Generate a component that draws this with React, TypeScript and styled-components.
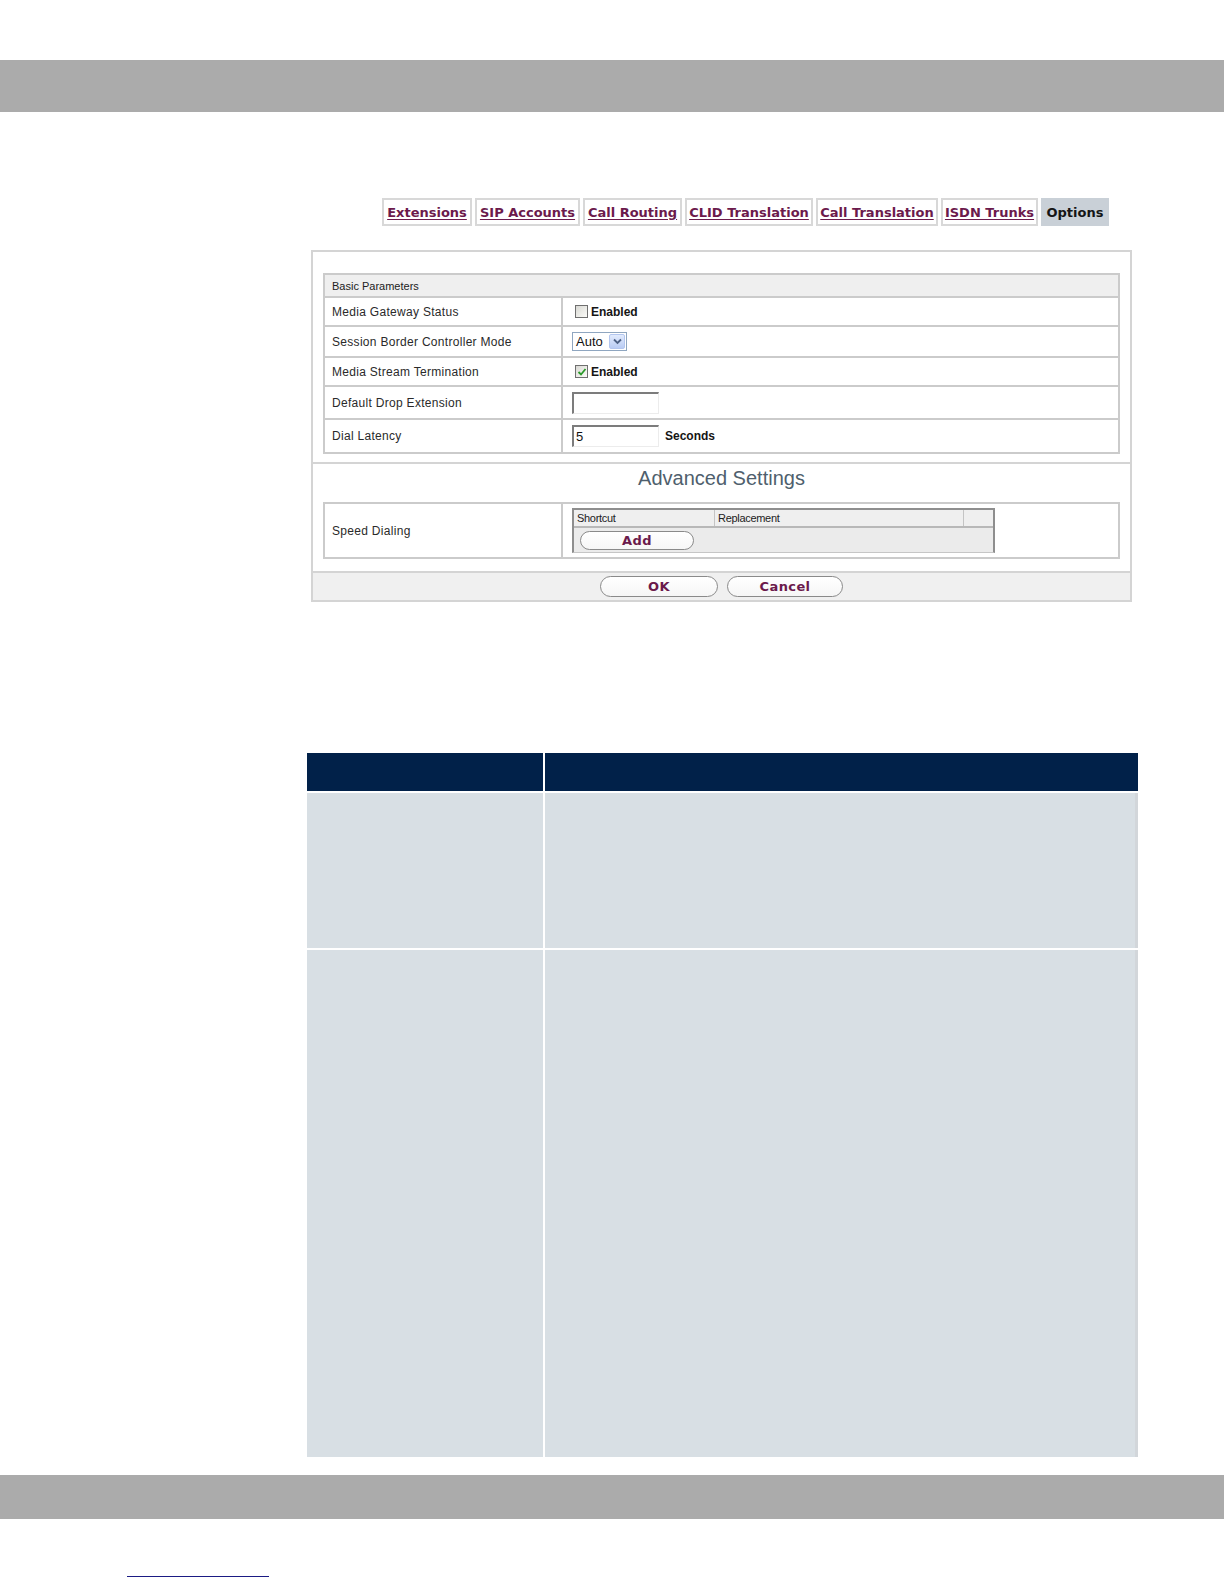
import styled, { createGlobalStyle } from "styled-components";

const GlobalStyle = createGlobalStyle`
  body {
    margin: 0;
    background: #fff;
    font-family: "Liberation Sans", Arial, sans-serif;
  }
`;

const MAROON = "#6b1a4c";
const GRID = "#cbcbcb";

const Page = styled.div`
  display: flex;
  flex-direction: column;
  width: 1224px;
`;

const GrayBar = styled.div<{ $top: number; $height: number }>`
  margin-top: ${(p) => p.$top}px;
  height: ${(p) => p.$height}px;
  background: #ababab;
`;

// Tabs
const TabRow = styled.nav`
  display: flex;
  gap: 3px;
  margin: 86px 0 0 382px;
  height: 28px;
`;

const Tab = styled.a<{ $w: number; $active?: boolean }>`
  box-sizing: border-box;
  display: flex;
  align-items: center;
  justify-content: center;
  width: ${(p) => p.$w}px;
  height: 28px;
  border: 2px solid ${(p) => (p.$active ? "#c9d0d7" : "#d8d8d8")};
  background: ${(p) => (p.$active ? "#c9d0d7" : "#fff")};
  font: bold 13px "DejaVu Sans", Verdana, sans-serif;
  color: ${(p) => (p.$active ? "#151515" : MAROON)};
  text-decoration: ${(p) => (p.$active ? "none" : "underline")};
  text-underline-offset: 2px;
  white-space: nowrap;
  cursor: pointer;
`;

// Config panel
const Panel = styled.section`
  box-sizing: border-box;
  width: 821px;
  margin: 24px 0 0 311px;
  border: 2px solid #d4d4d4;
  display: flex;
  flex-direction: column;
`;

const PanelBody = styled.div`
  padding: 21px 10px 8px;
`;

const AdvancedSection = styled.div`
  border-top: 2px solid #d4d4d4;
  padding: 0 10px 12px;
`;

const SectionTitle = styled.h2`
  margin: 0;
  padding: 2px 0 12px;
  text-align: center;
  font: 20px/24px "Liberation Sans", Arial, sans-serif;
  color: #4f5f6d;
`;

const Table = styled.div`
  border: 2px solid ${GRID};
  display: flex;
  flex-direction: column;
`;

const HeaderRow = styled.div`
  height: 21px;
  display: flex;
  align-items: center;
  padding-left: 7px;
  background: #efefef;
  font-size: 11px;
  color: #222;
`;

const Row = styled.div<{ $h: number; $first?: boolean }>`
  box-sizing: border-box;
  display: grid;
  grid-template-columns: 238px 1fr;
  height: ${(p) => p.$h}px;
  border-top: ${(p) => (p.$first ? "none" : `2px solid ${GRID}`)};
`;

const LabelCell = styled.div`
  display: flex;
  align-items: center;
  padding-left: 7px;
  border-right: 2px solid ${GRID};
  font-size: 12px;
  letter-spacing: 0.3px;
  color: #2a2a2a;
`;

const ValueCell = styled.div`
  display: flex;
  align-items: center;
  padding-left: 9px;
  font-size: 12px;
  color: #222;
`;

const CheckWrap = styled.label`
  display: flex;
  align-items: flex-end;
  gap: 3px;
  margin-left: 3px;
`;

const CheckBox = styled.span`
  box-sizing: border-box;
  width: 13px;
  height: 13px;
  border: 1px solid #6f6f6f;
  background: linear-gradient(135deg, #d9d9d4, #fbfbf8);
  display: inline-flex;
  align-items: center;
  justify-content: center;
`;

const BoldText = styled.span`
  font: bold 12px "Liberation Sans", Arial, sans-serif;
  color: #151515;
  line-height: 12px;
`;

const Select = styled.div`
  box-sizing: border-box;
  display: flex;
  align-items: center;
  width: 55px;
  height: 19px;
  border: 1px solid #8fa6c0;
  background: #fff;
  padding-left: 3px;
  font-size: 13px;
  color: #111;
`;

const SelectArrow = styled.span`
  box-sizing: border-box;
  margin-left: auto;
  margin-right: 1px;
  width: 16px;
  height: 15px;
  border: 1px solid #b3c6ef;
  border-radius: 2px;
  background: linear-gradient(#e2ebfd, #b9ccf4);
  display: flex;
  align-items: center;
  justify-content: center;
`;

const TextInput = styled.div`
  box-sizing: border-box;
  width: 87px;
  height: 22px;
  border-style: solid;
  border-width: 2px 1px 1px 2px;
  border-color: #7c7c7c #ececec #ececec #7c7c7c;
  background: #fff;
  padding: 2px 0 0 2px;
  font-size: 13px;
  color: #111;
`;

const Unit = styled(BoldText)`
  margin-left: 6px;
`;

// Speed dialing sub table
const SubTable = styled.div`
  box-sizing: border-box;
  width: 423px;
  border-style: solid;
  border-width: 2px 2px 1px 2px;
  border-color: #8e8e8e #8e8e8e #c6c6c6 #8e8e8e;
  background: #ebebeb;
`;

const SubHead = styled.div`
  display: grid;
  grid-template-columns: 141px 249px 1fr;
  height: 16px;
  border-bottom: 2px solid #b8b8b8;
  background: #efefef;
`;

const SubHeadCell = styled.div`
  display: flex;
  align-items: center;
  padding-left: 3px;
  border-right: 1px solid #c4c4c4;
  font-size: 11px;
  letter-spacing: -0.3px;
  color: #222;

  &:last-child {
    border-right: none;
  }
`;

const SubBody = styled.div`
  height: 24px;
  display: flex;
  align-items: center;
  padding-left: 6px;
`;

const PillButton = styled.button<{ $w: number; $h: number }>`
  box-sizing: border-box;
  width: ${(p) => p.$w}px;
  height: ${(p) => p.$h}px;
  padding: 0;
  border: 1px solid #8a8a8a;
  border-radius: 11px;
  background: linear-gradient(#ffffff, #f6f6f6);
  font: bold 13px "DejaVu Sans", Verdana, sans-serif;
  color: ${MAROON};
  letter-spacing: 0.4px;
  display: flex;
  align-items: center;
  justify-content: center;
  cursor: pointer;
`;

const Footer = styled.div`
  box-sizing: border-box;
  height: 29px;
  border-top: 2px solid #d4d4d4;
  background: #f0f0f0;
  display: flex;
  justify-content: center;
  align-items: center;
  gap: 9px;
`;

// Description table
const InfoTable = styled.div`
  display: grid;
  grid-template-columns: 236px 1fr;
  gap: 2px;
  width: 831px;
  margin: 151px 0 0 307px;
  background: #fff;
`;

const InfoHead = styled.div`
  height: 38px;
  background: #012149;
`;

const InfoCell = styled.div<{ $h: number; $edge?: boolean }>`
  height: ${(p) => p.$h}px;
  background: #d8dfe4;
  box-shadow: ${(p) => (p.$edge ? "inset -3px 0 0 #d2d6da" : "none")};
`;

const FooterLink = styled.div`
  margin: 57px 0 0 127px;
  width: 142px;
  border-top: 1px solid #1b1b84;
`;

const tabs = [
  { label: "Extensions", w: 90 },
  { label: "SIP Accounts", w: 105 },
  { label: "Call Routing", w: 99 },
  { label: "CLID Translation", w: 128 },
  { label: "Call Translation", w: 122 },
  { label: "ISDN Trunks", w: 97 },
  { label: "Options", w: 68, active: true },
];

function Check({ checked }: { checked?: boolean }) {
  return (
    <CheckWrap>
      <CheckBox>
        {checked && (
          <svg width="10" height="10" viewBox="0 0 10 10">
            <path d="M1.5 5 L4 7.5 L8.5 2" fill="none" stroke="#2a9a2a" strokeWidth="1.8" />
          </svg>
        )}
      </CheckBox>
      <BoldText>Enabled</BoldText>
    </CheckWrap>
  );
}

export default function App() {
  return (
    <Page>
      <GlobalStyle />
      <GrayBar $top={60} $height={52} />

      <TabRow>
        {tabs.map((t) => (
          <Tab key={t.label} $w={t.w} $active={t.active}>
            {t.label}
          </Tab>
        ))}
      </TabRow>

      <Panel>
        <PanelBody>
          <Table>
            <HeaderRow>Basic Parameters</HeaderRow>
            <Row $h={29}>
              <LabelCell>Media Gateway Status</LabelCell>
              <ValueCell>
                <Check />
              </ValueCell>
            </Row>
            <Row $h={31}>
              <LabelCell>Session Border Controller Mode</LabelCell>
              <ValueCell>
                <Select>
                  Auto
                  <SelectArrow>
                    <svg width="9" height="7" viewBox="0 0 9 7">
                      <path d="M1 1.5 L4.5 5 L8 1.5" fill="none" stroke="#4d6185" strokeWidth="1.8" />
                    </svg>
                  </SelectArrow>
                </Select>
              </ValueCell>
            </Row>
            <Row $h={29}>
              <LabelCell>Media Stream Termination</LabelCell>
              <ValueCell>
                <Check checked />
              </ValueCell>
            </Row>
            <Row $h={33}>
              <LabelCell>Default Drop Extension</LabelCell>
              <ValueCell>
                <TextInput />
              </ValueCell>
            </Row>
            <Row $h={34}>
              <LabelCell>Dial Latency</LabelCell>
              <ValueCell>
                <TextInput>5</TextInput>
                <Unit>Seconds</Unit>
              </ValueCell>
            </Row>
          </Table>
        </PanelBody>

        <AdvancedSection>
          <SectionTitle>Advanced Settings</SectionTitle>
          <Table>
            <Row $h={53} $first>
              <LabelCell>Speed Dialing</LabelCell>
              <ValueCell>
                <SubTable>
                  <SubHead>
                    <SubHeadCell>Shortcut</SubHeadCell>
                    <SubHeadCell>Replacement</SubHeadCell>
                    <SubHeadCell />
                  </SubHead>
                  <SubBody>
                    <PillButton $w={114} $h={19}>
                      Add
                    </PillButton>
                  </SubBody>
                </SubTable>
              </ValueCell>
            </Row>
          </Table>
        </AdvancedSection>

        <Footer>
          <PillButton $w={118} $h={21}>
            OK
          </PillButton>
          <PillButton $w={116} $h={21}>
            Cancel
          </PillButton>
        </Footer>
      </Panel>

      <InfoTable>
        <InfoHead />
        <InfoHead />
        <InfoCell $h={155} />
        <InfoCell $h={155} $edge />
        <InfoCell $h={507} />
        <InfoCell $h={507} $edge />
      </InfoTable>

      <GrayBar $top={18} $height={44} />
      <FooterLink />
    </Page>
  );
}
